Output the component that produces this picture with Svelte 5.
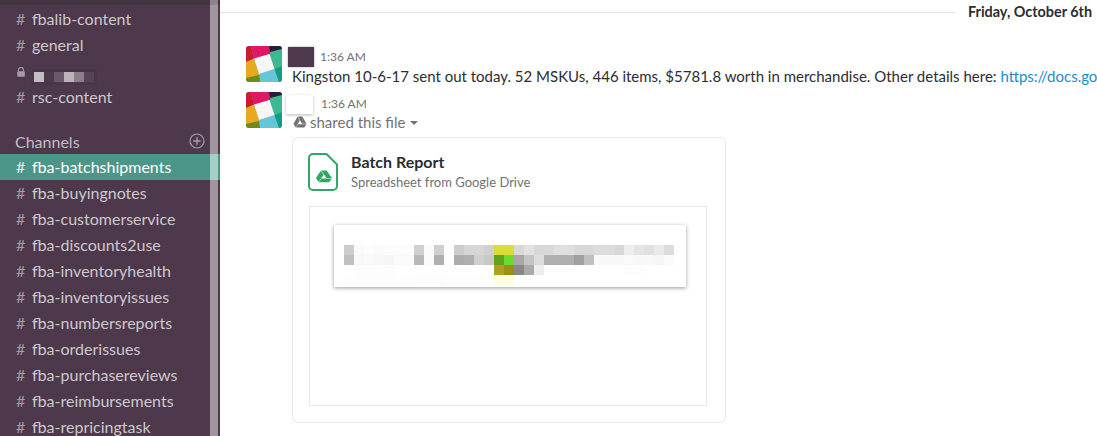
<script>
  const topChannels = [
    { name: 'fbalib-content' },
    { name: 'general' },
    { name: null, locked: true },
    { name: 'rsc-content' }
  ];
  const channels = [
    'fba-batchshipments','fba-buyingnotes','fba-customerservice','fba-discounts2use',
    'fba-inventoryhealth','fba-inventoryissues','fba-numbersreports','fba-orderissues',
    'fba-purchasereviews','fba-reimbursements','fba-repricingtask'
  ];
  const W = '#ffffff';
  const rows = [
    ['#cccccc','#fafafa','#fcfcfc','#fafafa','#fcfcfc','#fcfcfc','#fcfcfc','#d0d0d0','#fafafa','#d0d0d0','#fdfdfd','#cccccc','#d6d6d6','#d6d6d6','#d0d0d0','#dedb38','#dedb38','#d8d8d8','#e2e2e2','#d8d8d8','#d8d8d8','#e0e0e0','#e0e0e0','#d8d8d8','#d8d8d8','#dcdcdc','#dcdcdc','#d8d8d8','#eeeeee','#e4e4e4','#e0e0e0','#eaeaea','#dcdcdc'],
    ['#c0c0c0','#f8f8f8','#fafafa','#f8f8f8','#f6f6f6','#fafafa','#fafafa','#b8b8b8','#fafafa','#b0b0b0','#fdfdfd','#acacac','#b0b0b0','#d0d0d0','#c8c8c8','#5fa31f','#6bdc2c','#a8a8a8','#c4c4c4','#dcdcdc','#b0b0b0','#b0b0b0','#b0b0b0','#a0a0a0','#c0c0c0','#f8f8f8','#f8f8f8','#f8f8f8','#fafafa','#f8f8f8','#f8f8f8','#f6f6f6','#fafafa'],
    [W,'#fdfdfd','#fdfdfd','#fdfdfd','#fcfcfc',W,W,W,W,W,W,W,W,W,W,'#aba31f','#98901a','#888888','#aaaaaa','#eeeeee',W,W,W,W,W,W,W,W,'#fdfdfd','#fdfdfd',W,W,W],
    ['#fdfdfd','#fdfdfd','#fdfdfd','#fdfdfd','#fdfdfd','#fdfdfd','#fdfdfd','#fcfcfc','#fcfcfc','#fcfcfc','#fdfdfd','#fdfdfd','#fdfdfd','#fdfdfd',W,'#fdfde0','#fdfde0',W,W,W,W,W,W,W,W,W,W,W,W,W,W,W,W]
  ];
  const cells = rows.flat();
  const redacted = [
    { c: '#c4bcc4', m: 0 }, { c: '#6b5869', m: 10 },
    { c: '#bdb3bc', m: 0 }, { c: '#8e7e8c', m: 0 }, { c: '#584456', m: 0 }
  ];
</script>

{#snippet logo()}
  <svg class="avatar" viewBox="0 0 36 36" aria-hidden="true">
    <g style="clip-path: inset(0 round 3px)">
      <rect width="36" height="36" fill="#3eb890"/>
      <polygon points="5,0 25,0 24,8 8,13" fill="#e01765"/>
      <polygon points="0,0 5,0 8,13 0,16" fill="#cf1a34"/>
      <polygon points="23,0 36,0 36,3 24,6" fill="#2d1b3f"/>
      <polygon points="0,16 8,12.500 13,28 13,30 0,33" fill="#e8a820"/>
      <polygon points="0,32 13,29 15,36 0,36" fill="#6f8a1d"/>
      <polygon points="13,28 28.500,23 33,36 14,36" fill="#67c5d8"/>
      <polygon points="28.500,23 36,20 36,36 33,36" fill="#179c84"/>
      <polygon points="8,12.500 23.500,8 28.500,23 13,28" fill="#f7f6f4"/>
    </g>
  </svg>
{/snippet}

{#snippet driveShape()}
  <polygon points="5.400,0.500 10.600,0.500 15.600,9 10.400,9"/>
  <polygon points="5.100,0.900 7.700,5.300 3,13.300 0.400,9"/>
  <polygon points="5.600,9.500 15.600,9.500 13,13.500 3.300,13.500"/>
{/snippet}

<div class="app">
  <aside class="sidebar">
    <div class="side-main">
      <div class="topband"></div>
      <ul class="list">
        {#each topChannels as ch}
          <li class="row">
            {#if ch.locked}
              <svg class="lock" viewBox="0 0 8 10" aria-hidden="true">
                <path d="M1.500 4.500V3a2.500 2.500 0 0 1 5 0v1.500" fill="none" stroke="currentColor" stroke-width="1.200"/>
                <rect x="0.200" y="4.300" width="7.600" height="5.500" rx="1" fill="currentColor"/>
              </svg>
              <span class="redacted">
                {#each redacted as r}
                  <i style="background:{r.c};margin-left:{r.m}px"></i>
                {/each}
              </span>
            {:else}
              <span class="hash">#</span><span>{ch.name}</span>
            {/if}
          </li>
        {/each}
      </ul>
      <div class="section">
        <span class="section-label">Channels</span>
        <svg class="plus" viewBox="0 0 16 16" aria-hidden="true">
          <circle cx="8" cy="8" r="7" fill="none" stroke="currentColor" stroke-width="1.200"/>
          <path d="M8 4.300v7.400M4.300 8h7.400" stroke="currentColor" stroke-width="1.400"/>
        </svg>
      </div>
      <ul class="list">
        {#each channels as name, i}
          <li class="row" class:active={i === 0}><span class="hash">#</span><span>{name}</span></li>
        {/each}
      </ul>
    </div>
    <div class="scrollbar">
      <div class="sb-top"></div>
      <div class="sb-active"></div>
    </div>
  </aside>

  <main class="main">
    <div class="divider">
      <div class="rule"></div>
      <div class="date">Friday, October 6th</div>
    </div>

    <div class="msg first">
      {@render logo()}
      <div class="body">
        <div class="meta"><span class="name purple"></span><span class="time">1:36 AM</span></div>
        <div class="text">Kingston 10-6-17 sent out today. 52 MSKUs, 446 items, $5781.8 worth in merchandise. Other details here: <span class="link">https://docs.google.com/spreadsheets/d/1a2b3c</span></div>
      </div>
    </div>

    <div class="msg second">
      {@render logo()}
      <div class="body">
        <div class="meta lower"><span class="name blank"></span><span class="time">1:36 AM</span></div>
        <div class="shared">
          <svg class="drive-small" viewBox="0 0 16 14" aria-hidden="true" fill="currentColor">{@render driveShape()}</svg>
          <span>shared this file</span>
          <span class="caret"></span>
        </div>
        <div class="card">
          <div class="card-head">
            <svg class="file" viewBox="0 0 30 38" aria-hidden="true">
              <path d="M5 1h13.500L29 11.500V33a4 4 0 0 1-4 4H5a4 4 0 0 1-4-4V5a4 4 0 0 1 4-4z" fill="#fff" stroke="#2fa866" stroke-width="2" stroke-linejoin="round"/>
              <g transform="translate(7.500 17) scale(1.050 0.900)" fill="#2fa866">{@render driveShape()}</g>
            </svg>
            <div class="card-title">
              <div class="title">Batch Report</div>
              <div class="sub">Spreadsheet from Google Drive</div>
            </div>
          </div>
          <div class="thumb">
            <div class="sheet">
              <div class="pixels">
                {#each cells as c}
                  <i style="background:{c}"></i>
                {/each}
              </div>
            </div>
          </div>
        </div>
      </div>
    </div>
  </main>
</div>

<style>
  :global(body) { margin: 0; background: #fff; overflow: hidden; }
  .app {
    display: flex;
    width: 1097px;
    height: 436px;
    overflow: hidden;
    font-family: Lato, "Open Sans", sans-serif;
    color: #2c2d30;
  }
  .sidebar { flex: 0 0 220px; display: flex; height: 436px; background: #4d394b; }
  .side-main { width: 210px; flex: none; }
  .topband { height: 6px; background: linear-gradient(#443340 0 5px, #4d394b 5px); }
  .list { list-style: none; margin: 0; padding: 0; }
  .row {
    height: 26px;
    line-height: 26px;
    display: flex;
    align-items: center;
    padding-left: 16px;
    font-size: 16px;
    color: #cec8cd;
    white-space: nowrap;
  }
  .row.active { background: #4c9689; color: #fff; }
  .hash { width: 16px; flex: none; color: #a79ca6; }
  .row.active .hash { color: #e3efed; }
  .lock { width: 8px; height: 10px; color: #a79ca6; margin: 2px 0 0 1px; }
  .redacted { display: flex; height: 10px; margin: 12px 0 0 9px; box-shadow: 0 0 0 3px #4a3648; }
  .redacted i { display: block; width: 10px; height: 10px; }
  .section {
    height: 26px;
    margin-top: 18px;
    padding: 0 5px 0 15px;
    display: flex;
    align-items: center;
    justify-content: space-between;
    font-size: 16px;
    color: #c4bbc3;
    box-sizing: border-box;
    width: 210px;
  }
  .section-label { line-height: 24px; margin-top: 1px; }
  .plus { width: 16px; height: 16px; color: #a89ea7; margin-bottom: 1px; }
  .scrollbar { width: 10px; flex: none; background: linear-gradient(90deg, #a2949f 0 8px, #4d394b 8px); }
  .sb-top { height: 5px; background: linear-gradient(90deg, #8e8290 0 8px, #443340 8px); }
  .sb-active { margin-top: 149px; height: 26px; background: linear-gradient(90deg, #a5d0c8 0 8px, #4c9689 8px); }

  .main { flex: 1; min-width: 0; background: #fff; overflow: hidden; }
  .divider { height: 25px; display: flex; align-items: flex-start; }
  .rule { flex: none; width: 735px; height: 1px; margin-top: 12px; background: #e5e5e5; }
  .date {
    margin-left: 13px;
    font-size: 14.400px;
    font-weight: 700;
    line-height: 26px;
    white-space: nowrap;
    margin-top: -1px;
  }
  .msg { display: flex; padding-left: 26px; }
  .first { margin-top: 21px; height: 46px; }
  .avatar { width: 36px; height: 36px; flex: none; display: block; }
  .body { margin-left: 10px; min-width: 0; flex: 1; }
  .meta { display: flex; align-items: center; height: 21px; margin-left: -4px; }
  .meta.lower { margin-top: 1px; height: 20px; }
  .name { display: block; width: 26px; height: 20px; }
  .purple { background: #4d394b; margin-top: 1px; box-shadow: 0 0 2px rgba(77,57,75,.5); }
  .blank { background: #fff; box-shadow: 0 1px 3px rgba(0,0,0,.28); margin-left: -2px; margin-right: 2px; margin-top: 2px; width: 27px; height: 19px; }
  .time { margin-left: 6px; font-size: 12px; color: #717274; }
  .text { font-size: 15px; line-height: 20px; white-space: nowrap; margin-top: -1px; }
  .link { color: #1c8ccb; }
  .shared {
    display: flex;
    align-items: center;
    height: 20px;
    margin-top: -1px;
    font-size: 15px;
    color: #717274;
  }
  .drive-small { width: 14px; height: 12px; margin: 0 3px 0 1px; color: #717274; }
  .caret {
    margin: 1px 0 0 5px;
    border: 4px solid transparent;
    border-top-color: #717274;
    border-bottom: 0;
  }
  .card {
    width: 434px;
    height: 286px;
    box-sizing: border-box;
    margin-top: 5px;
    border: 1px solid #e8e8e8;
    border-radius: 6px;
    background: #fff;
    padding: 15px 18px 0 16px;
  }
  .card-head { display: flex; height: 54px; margin: 0 0 0 -1px; box-sizing: border-box; }
  .file { width: 30px; height: 38px; flex: none; }
  .card-title { margin-left: 13px; margin-top: -1px; }
  .title { font-size: 16px; font-weight: 700; line-height: 20px; color: #2c2d30; }
  .sub { font-size: 13px; line-height: 20px; color: #717274; }
  .thumb {
    width: 398px;
    height: 200px;
    box-sizing: border-box;
    border: 1px solid #e8e8e8;
    padding: 18px 20px 0 24px;
    margin-top: -1px;
  }
  .sheet {
    width: 352px;
    height: 62px;
    box-sizing: border-box;
    background: #fff;
    box-shadow: 0 1px 4px rgba(0,0,0,.4);
    padding: 20px 0 0 10px;
  }
  .pixels { display: grid; grid-template-columns: repeat(33, 10px); grid-auto-rows: 10px; }
  .pixels i { display: block; }
</style>
